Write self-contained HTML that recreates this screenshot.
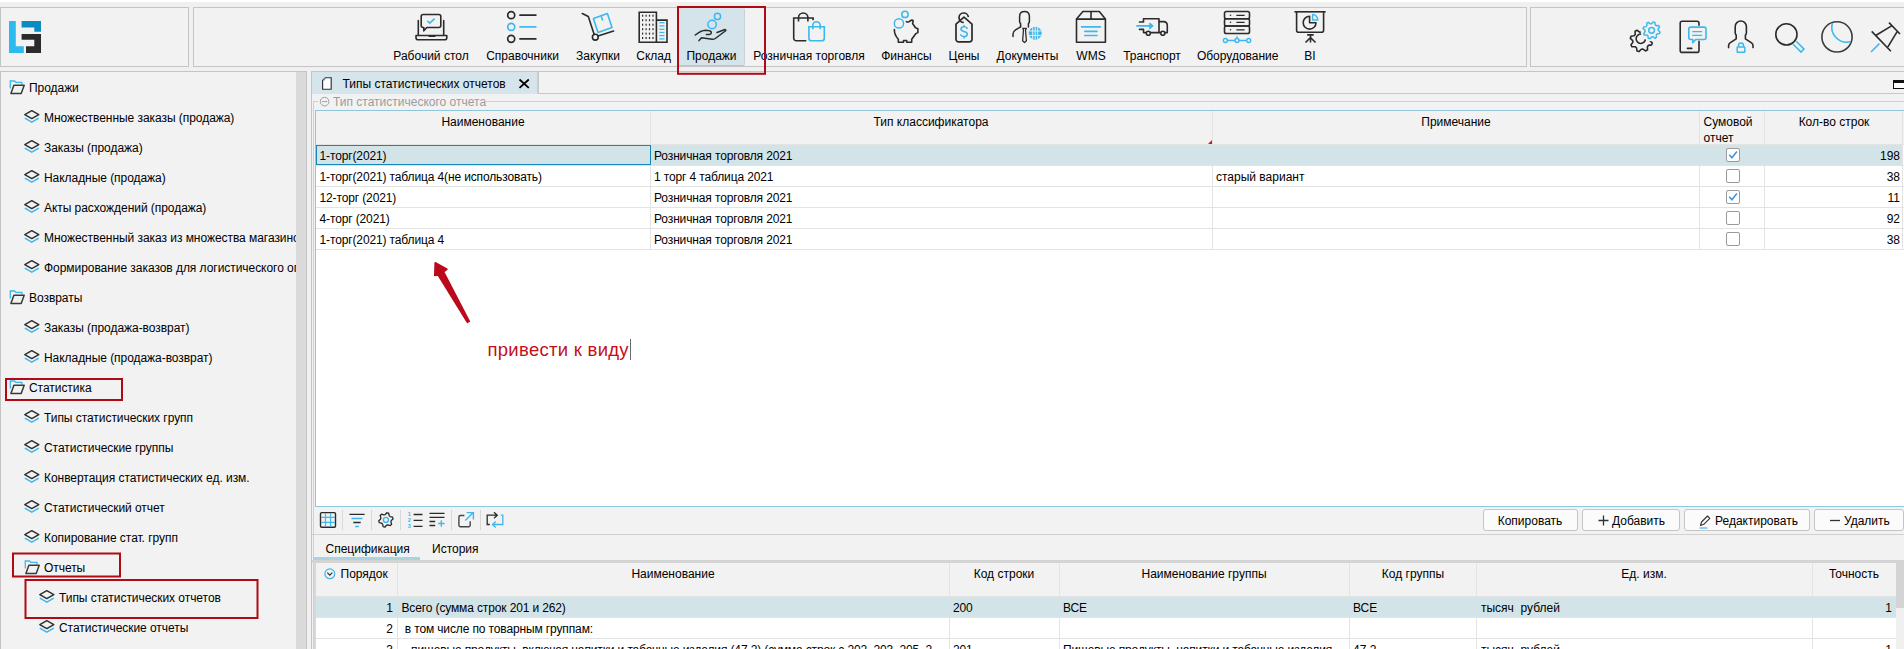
<!DOCTYPE html><html><head><meta charset="utf-8"><style>
*{box-sizing:border-box;margin:0;padding:0}
html,body{width:1904px;height:649px;overflow:hidden;background:#f0f0f0;font-family:"Liberation Sans",sans-serif;font-size:12px;color:#000}
.ab{position:absolute}
.t{position:absolute;white-space:nowrap;line-height:16px;height:16px}
.c{text-align:center}
.r{text-align:right}
svg{position:absolute;overflow:visible}
</style></head><body>
<div class="ab" style="left:0;top:0;width:1904px;height:2px;background:#fff"></div>
<div class="ab" style="left:0;top:7px;width:189px;height:60px;border:1px solid #c4c4c4;background:#f2f2f2"></div>
<div class="ab" style="left:193px;top:7px;width:1334px;height:60px;border:1px solid #c4c4c4;background:#f2f2f2"></div>
<div class="ab" style="left:1530px;top:7px;width:380px;height:60px;border:1px solid #c4c4c4;background:#f2f2f2"></div>
<div class="ab" style="left:679px;top:8px;width:66px;height:58px;background:#d5e4ea;border-right:1px solid #c9d3d7;border-bottom:1px solid #c4c4c4;border-radius:0 2px 2px 0"></div>
<div class="t c" style="left:331.0px;top:47.5px;width:200px;">Рабочий стол</div>
<div class="t c" style="left:422.5px;top:47.5px;width:200px;">Справочники</div>
<div class="t c" style="left:498.0px;top:47.5px;width:200px;">Закупки</div>
<div class="t c" style="left:553.6px;top:47.5px;width:200px;">Склад</div>
<div class="t c" style="left:611.5px;top:47.5px;width:200px;">Продажи</div>
<div class="t c" style="left:709.0px;top:47.5px;width:200px;">Розничная торговля</div>
<div class="t c" style="left:806.4px;top:47.5px;width:200px;">Финансы</div>
<div class="t c" style="left:864.0px;top:47.5px;width:200px;">Цены</div>
<div class="t c" style="left:927.4000000000001px;top:47.5px;width:200px;">Документы</div>
<div class="t c" style="left:991.0px;top:47.5px;width:200px;">WMS</div>
<div class="t c" style="left:1052.0px;top:47.5px;width:200px;">Транспорт</div>
<div class="t c" style="left:1137.7px;top:47.5px;width:200px;">Оборудование</div>
<div class="t c" style="left:1210.0px;top:47.5px;width:200px;">BI</div>
<div class="ab" style="left:0;top:71px;width:307px;height:600px;border:1px solid #c4c4c4;background:#f2f2f2"></div>
<div class="ab" style="left:296px;top:72px;width:10px;height:600px;background:#dadada"></div>
<div class="ab" style="left:1px;top:72px;width:295px;height:577px;overflow:hidden">
<div class="t" style="left:28px;top:8px;letter-spacing:-0.05px">Продажи</div>
<div class="t" style="left:43px;top:38px;letter-spacing:-0.05px">Множественные заказы (продажа)</div>
<div class="t" style="left:43px;top:68px;letter-spacing:-0.05px">Заказы (продажа)</div>
<div class="t" style="left:43px;top:98px;letter-spacing:-0.05px">Накладные (продажа)</div>
<div class="t" style="left:43px;top:128px;letter-spacing:-0.05px">Акты расхождений (продажа)</div>
<div class="t" style="left:43px;top:158px;letter-spacing:-0.05px">Множественный заказ из множества магазинов</div>
<div class="t" style="left:43px;top:188px;letter-spacing:-0.05px">Формирование заказов для логистического оператора</div>
<div class="t" style="left:28px;top:218px;letter-spacing:-0.05px">Возвраты</div>
<div class="t" style="left:43px;top:248px;letter-spacing:-0.05px">Заказы (продажа-возврат)</div>
<div class="t" style="left:43px;top:278px;letter-spacing:-0.05px">Накладные (продажа-возврат)</div>
<div class="t" style="left:28px;top:308px;letter-spacing:-0.05px">Статистика</div>
<div class="t" style="left:43px;top:338px;letter-spacing:-0.05px">Типы статистических групп</div>
<div class="t" style="left:43px;top:368px;letter-spacing:-0.05px">Статистические группы</div>
<div class="t" style="left:43px;top:398px;letter-spacing:-0.05px">Конвертация статистических ед. изм.</div>
<div class="t" style="left:43px;top:428px;letter-spacing:-0.05px">Статистический отчет</div>
<div class="t" style="left:43px;top:458px;letter-spacing:-0.05px">Копирование стат. групп</div>
<div class="t" style="left:43px;top:488px;letter-spacing:-0.05px">Отчеты</div>
<div class="t" style="left:58px;top:518px;letter-spacing:-0.05px">Типы статистических отчетов</div>
<div class="t" style="left:58px;top:548px;letter-spacing:-0.05px">Статистические отчеты</div>
</div>
<div class="ab" style="left:311px;top:71px;width:1600px;height:600px;border:1px solid #c4c4c4;background:#f2f2f2"></div>
<div class="ab" style="left:312px;top:72px;width:226px;height:22px;background:#d6e5eb;border-right:1px solid #c6d0d4"></div>
<div class="t " style="left:342.5px;top:76px;">Типы статистических отчетов</div>
<div class="ab" style="left:1893px;top:80px;width:12px;height:9px;border:1px solid #111;border-top-width:3px;border-right:none;background:#fff"></div>
<div class="ab" style="left:313px;top:101px;width:1600px;height:600px;border-left:1px solid #d0d0d0;border-top:1px solid #d0d0d0"></div>
<div class="ab" style="left:318px;top:95px;width:168px;height:12px;background:#f2f2f2"></div>
<div class="t " style="left:333px;top:94px;color:#9c9c9c">Тип статистического отчета</div>
<div class="ab" style="left:315px;top:110px;width:1600px;height:397px;border:1px solid #8fc6dc;background:#fff"></div>
<div class="ab" style="left:316px;top:111px;width:1588px;height:34px;background:#f2f2f2;border-bottom:1px solid #e3e3e3"></div>
<div class="ab" style="left:650px;top:111px;width:1px;height:138px;background:#e3e3e3"></div>
<div class="ab" style="left:1212px;top:111px;width:1px;height:138px;background:#e3e3e3"></div>
<div class="ab" style="left:1699px;top:111px;width:1px;height:138px;background:#e3e3e3"></div>
<div class="ab" style="left:1764px;top:111px;width:1px;height:138px;background:#e3e3e3"></div>
<div class="ab" style="left:1902px;top:111px;width:1px;height:138px;background:#e3e3e3"></div>
<div class="t c" style="left:383.0px;top:114px;width:200px;">Наименование</div>
<div class="t c" style="left:831.0px;top:114px;width:200px;">Тип классификатора</div>
<div class="t c" style="left:1356.0px;top:114px;width:200px;">Примечание</div>
<div class="t " style="left:1703.5px;top:114px;">Сумовой</div>
<div class="t " style="left:1703.5px;top:130px;">отчет</div>
<div class="t c" style="left:1734.0px;top:114px;width:200px;">Кол-во строк</div>
<div class="ab" style="left:316px;top:145px;width:1586px;height:20px;background:#d3e4e9"></div>
<div class="ab" style="left:316px;top:165px;width:1588px;height:1px;background:#e3e3e3"></div>
<div class="t " style="left:319.5px;top:148px;letter-spacing:-0.13px">1-торг(2021)</div>
<div class="t " style="left:654px;top:148px;letter-spacing:-0.13px">Розничная торговля 2021</div>
<div class="t " style="left:1216px;top:148px;"></div>
<div class="t r" style="left:1700px;top:148px;width:200px;">198</div>
<div class="ab" style="left:1726px;top:148px;width:14px;height:14px;border:1px solid #9a9a9a;border-radius:2px;background:#fff"></div>
<div class="ab" style="left:316px;top:186px;width:1588px;height:1px;background:#e3e3e3"></div>
<div class="t " style="left:319.5px;top:169px;letter-spacing:-0.13px">1-торг(2021) таблица 4(не использовать)</div>
<div class="t " style="left:654px;top:169px;letter-spacing:-0.13px">1 торг 4 таблица 2021</div>
<div class="t " style="left:1216px;top:169px;">старый вариант</div>
<div class="t r" style="left:1700px;top:169px;width:200px;">38</div>
<div class="ab" style="left:1726px;top:169px;width:14px;height:14px;border:1px solid #9a9a9a;border-radius:2px;background:#fff"></div>
<div class="ab" style="left:316px;top:207px;width:1588px;height:1px;background:#e3e3e3"></div>
<div class="t " style="left:319.5px;top:190px;letter-spacing:-0.13px">12-торг (2021)</div>
<div class="t " style="left:654px;top:190px;letter-spacing:-0.13px">Розничная торговля 2021</div>
<div class="t " style="left:1216px;top:190px;"></div>
<div class="t r" style="left:1700px;top:190px;width:200px;">11</div>
<div class="ab" style="left:1726px;top:190px;width:14px;height:14px;border:1px solid #9a9a9a;border-radius:2px;background:#fff"></div>
<div class="ab" style="left:316px;top:228px;width:1588px;height:1px;background:#e3e3e3"></div>
<div class="t " style="left:319.5px;top:211px;letter-spacing:-0.13px">4-торг (2021)</div>
<div class="t " style="left:654px;top:211px;letter-spacing:-0.13px">Розничная торговля 2021</div>
<div class="t " style="left:1216px;top:211px;"></div>
<div class="t r" style="left:1700px;top:211px;width:200px;">92</div>
<div class="ab" style="left:1726px;top:211px;width:14px;height:14px;border:1px solid #9a9a9a;border-radius:2px;background:#fff"></div>
<div class="ab" style="left:316px;top:249px;width:1588px;height:1px;background:#e3e3e3"></div>
<div class="t " style="left:319.5px;top:232px;letter-spacing:-0.13px">1-торг(2021) таблица 4</div>
<div class="t " style="left:654px;top:232px;letter-spacing:-0.13px">Розничная торговля 2021</div>
<div class="t " style="left:1216px;top:232px;"></div>
<div class="t r" style="left:1700px;top:232px;width:200px;">38</div>
<div class="ab" style="left:1726px;top:232px;width:14px;height:14px;border:1px solid #9a9a9a;border-radius:2px;background:#fff"></div>
<div class="ab" style="left:316px;top:145px;width:335px;height:20px;border:1px solid #1287be"></div>
<div class="ab" style="left:538px;top:72px;width:1366px;height:22px;border-left:1px solid #c8c8c8;border-bottom:1px solid #c8c8c8"></div>
<div class="ab" style="left:487.5px;top:338px;font-size:18.5px;line-height:24px;color:#c40f1a;white-space:nowrap;letter-spacing:0.28px">привести к виду</div>
<div class="ab" style="left:629.5px;top:339px;width:1px;height:21px;background:#6a6a6a"></div>
<div class="ab" style="left:312px;top:534px;width:1600px;height:1px;background:#d0d0d0"></div>
<div class="ab" style="left:342px;top:510px;width:1px;height:20px;background:#d8d8d8"></div>
<div class="ab" style="left:371px;top:510px;width:1px;height:20px;background:#d8d8d8"></div>
<div class="ab" style="left:400px;top:510px;width:1px;height:20px;background:#d8d8d8"></div>
<div class="ab" style="left:451px;top:510px;width:1px;height:20px;background:#d8d8d8"></div>
<div class="ab" style="left:480px;top:510px;width:1px;height:20px;background:#d8d8d8"></div>
<div class="ab" style="left:1483px;top:509px;width:95px;height:22px;border:1px solid #c5c5c5;border-radius:3px;background:#fbfbfb"></div>
<div class="ab" style="left:1582px;top:509px;width:98px;height:22px;border:1px solid #c5c5c5;border-radius:3px;background:#fbfbfb"></div>
<div class="ab" style="left:1684px;top:509px;width:126px;height:22px;border:1px solid #c5c5c5;border-radius:3px;background:#fbfbfb"></div>
<div class="ab" style="left:1814px;top:509px;width:90px;height:22px;border:1px solid #c5c5c5;border-radius:3px;background:#fbfbfb"></div>
<div class="t c" style="left:1430.0px;top:513px;width:200px;">Копировать</div>
<div class="t " style="left:1612px;top:513px;">Добавить</div>
<div class="t " style="left:1715px;top:513px;">Редактировать</div>
<div class="t " style="left:1844px;top:513px;">Удалить</div>
<div class="t " style="left:325.5px;top:541px;">Спецификация</div>
<div class="t " style="left:432px;top:541px;">История</div>
<div class="ab" style="left:312px;top:560px;width:1600px;height:3px;background:#d4d4d4"></div>
<div class="ab" style="left:313px;top:557px;width:107px;height:3px;background:#a9d3df"></div>
<div class="ab" style="left:314px;top:563px;width:1590px;height:100px;background:#fff;border-left:2px solid #d8d8d8"></div>
<div class="ab" style="left:316px;top:563px;width:1580px;height:34px;background:#f2f2f2;border-bottom:1px solid #e3e3e3"></div>
<div class="ab" style="left:1896px;top:563px;width:8px;height:90px;background:#f0f0f0"></div>
<div class="ab" style="left:1896px;top:563px;width:8px;height:45px;background:#d4d4d4"></div>
<div class="ab" style="left:397px;top:563px;width:1px;height:90px;background:#e3e3e3"></div>
<div class="ab" style="left:949px;top:563px;width:1px;height:90px;background:#e3e3e3"></div>
<div class="ab" style="left:1059px;top:563px;width:1px;height:90px;background:#e3e3e3"></div>
<div class="ab" style="left:1349px;top:563px;width:1px;height:90px;background:#e3e3e3"></div>
<div class="ab" style="left:1476px;top:563px;width:1px;height:90px;background:#e3e3e3"></div>
<div class="ab" style="left:1812px;top:563px;width:1px;height:90px;background:#e3e3e3"></div>
<div class="t " style="left:340.5px;top:566px;">Порядок</div>
<div class="t c" style="left:573.0px;top:566px;width:200px;">Наименование</div>
<div class="t c" style="left:904.0px;top:566px;width:200px;">Код строки</div>
<div class="t c" style="left:1104.0px;top:566px;width:200px;">Наименование группы</div>
<div class="t c" style="left:1313.0px;top:566px;width:200px;">Код группы</div>
<div class="t c" style="left:1544.0px;top:566px;width:200px;">Ед. изм.</div>
<div class="t c" style="left:1754.0px;top:566px;width:200px;">Точность</div>
<div class="ab" style="left:316px;top:597px;width:1580px;height:20px;background:#d3e4e9"></div>
<div class="ab" style="left:316px;top:617px;width:1580px;height:1px;background:#e3e3e3"></div>
<div class="t r" style="left:193px;top:600px;width:200px;">1</div>
<div class="t" style="left:401.5px;top:600px;width:546px;overflow:hidden;letter-spacing:-0.13px">Всего (сумма строк 201 и 262)</div>
<div class="t " style="left:953px;top:600px;letter-spacing:-0.13px">200</div>
<div class="t" style="left:1063px;top:600px;width:284px;overflow:hidden;letter-spacing:-0.13px">ВСЕ</div>
<div class="t " style="left:1353px;top:600px;">ВСЕ</div>
<div class="t " style="left:1481px;top:600px;">тысяч&nbsp; рублей</div>
<div class="t r" style="left:1692px;top:600px;width:200px;">1</div>
<div class="ab" style="left:316px;top:638px;width:1580px;height:1px;background:#e3e3e3"></div>
<div class="t r" style="left:193px;top:621px;width:200px;">2</div>
<div class="t" style="left:401.5px;top:621px;width:546px;overflow:hidden;letter-spacing:-0.13px">&nbsp;в том числе по товарным группам:</div>
<div class="t " style="left:953px;top:621px;letter-spacing:-0.13px"></div>
<div class="t" style="left:1063px;top:621px;width:284px;overflow:hidden;letter-spacing:-0.13px"></div>
<div class="t " style="left:1353px;top:621px;"></div>
<div class="t " style="left:1481px;top:621px;"></div>
<div class="t r" style="left:1692px;top:621px;width:200px;"></div>
<div class="ab" style="left:316px;top:659px;width:1580px;height:1px;background:#e3e3e3"></div>
<div class="t r" style="left:193px;top:642px;width:200px;">3</div>
<div class="t" style="left:401.5px;top:642px;width:546px;overflow:hidden;letter-spacing:-0.13px">&nbsp;&nbsp;&nbsp;пищевые продукты, включая напитки и табачные изделия (47.2) (сумма строк с 202, 203, 205, 2</div>
<div class="t " style="left:953px;top:642px;letter-spacing:-0.13px">201</div>
<div class="t" style="left:1063px;top:642px;width:284px;overflow:hidden;letter-spacing:-0.13px">Пищевые продукты, напитки и табачные изделия</div>
<div class="t " style="left:1353px;top:642px;">47.2</div>
<div class="t " style="left:1481px;top:642px;">тысяч&nbsp; рублей</div>
<div class="t r" style="left:1692px;top:642px;width:200px;">1</div>
<svg style="left:0;top:0" width="1904" height="649" viewBox="0 0 1904 649">
<path d="M9 21h6.8v25.2h8V53H9z" fill="#2dbbef"/><path d="M21.6 21H41v10.7h-6.7v-4.3H21.6z" fill="#0a8cc0"/><path d="M21.6 33.9H41V53H26v-6.8h8.3v-6.5H21.6z" fill="#2b2b2b"/>
<g fill="none" stroke="#2b2b2b" stroke-width="1.6" stroke-linecap="round" stroke-linejoin="round"><path d="M423.2 14.5h15.6a2 2 0 0 1 2 2v9a2 2 0 0 1-2 2h-12l-3 3.3v-3.3h-.6a2 2 0 0 1-2-2v-9a2 2 0 0 1 2-2z"/><path d="M418.3 20.5v14.3M443.7 20.5v14.3"/><path d="M416 35.5h30.8v2.3a2 2 0 0 1-2 2h-26.8a2 2 0 0 1-2-2z"/><path d="M421 35.5h7.5l1 1h5l1-1h7.5" stroke-width="1.2"/></g>
<path d="M427.3 20.7l2.5 2.5 4.8-4.6" fill="none" stroke="#3db8ee" stroke-width="1.6"/>
<g fill="none" stroke="#2b2b2b" stroke-width="1.7"><circle cx="511.2" cy="15.2" r="3.5"/><circle cx="511.2" cy="38.8" r="3.5"/><path d="M519.3 15.2h17.2M519.3 38.8h17.2"/></g>
<g fill="none" stroke="#3db8ee" stroke-width="1.7"><circle cx="511.2" cy="26.9" r="3.5"/><path d="M519.3 26.9h17.2"/></g>
<g fill="none" stroke="#2b2b2b" stroke-width="1.6" stroke-linecap="round" stroke-linejoin="round"><path d="M582.3 13.5l6 3 5.8 17.8"/><circle cx="595.3" cy="37.2" r="2.9"/><path d="M598 36l15.6-5"/></g>
<g fill="none" stroke="#3db8ee" stroke-width="1.6" stroke-linejoin="round"><path d="M593.4 18.5l14-4.9 4.6 14-14 4.9z"/><path d="M601.3 16.2l1.3 4.2"/></g>
<g fill="none" stroke="#2b2b2b" stroke-width="1.6"><path d="M639.2 12.2h17.2v30H639.2z"/><path d="M656.4 20.1h10.6v22.1H656.4"/></g>
<g fill="#2b2b2b"><rect x="642.0" y="14.7" width="1.2" height="2" /><rect x="642.0" y="19.2" width="1.2" height="2" /><rect x="642.0" y="23.7" width="1.2" height="2" /><rect x="642.0" y="28.2" width="1.2" height="2" /><rect x="642.0" y="32.6" width="1.2" height="2" /><rect x="642.0" y="37.0" width="1.2" height="2" /><rect x="645.5" y="14.7" width="1.2" height="2" /><rect x="645.5" y="19.2" width="1.2" height="2" /><rect x="645.5" y="23.7" width="1.2" height="2" /><rect x="645.5" y="28.2" width="1.2" height="2" /><rect x="645.5" y="32.6" width="1.2" height="2" /><rect x="645.5" y="37.0" width="1.2" height="2" /><rect x="648.9" y="14.7" width="1.2" height="2" /><rect x="648.9" y="19.2" width="1.2" height="2" /><rect x="648.9" y="23.7" width="1.2" height="2" /><rect x="648.9" y="28.2" width="1.2" height="2" /><rect x="648.9" y="32.6" width="1.2" height="2" /><rect x="648.9" y="37.0" width="1.2" height="2" /><rect x="652.4" y="14.7" width="1.2" height="2" /><rect x="652.4" y="19.2" width="1.2" height="2" /><rect x="652.4" y="23.7" width="1.2" height="2" /><rect x="652.4" y="28.2" width="1.2" height="2" /><rect x="652.4" y="32.6" width="1.2" height="2" /><rect x="652.4" y="37.0" width="1.2" height="2" /></g>
<g stroke="#3db8ee" stroke-width="1.3"><path d="M659.3 22.7h5.2"/><path d="M659.3 25.9h5.2"/><path d="M659.3 29.3h5.2"/><path d="M659.3 32.5h5.2"/><path d="M659.3 35.6h5.2"/><path d="M659.3 38.9h5.2"/></g>
<g fill="none" stroke="#3db8ee" stroke-width="1.5"><circle cx="717.5" cy="16.4" r="3.1"/><circle cx="712.1" cy="24.5" r="4.2"/></g>
<g fill="none" stroke="#2b2b2b" stroke-width="1.5" stroke-linecap="round" stroke-linejoin="round"><path d="M695.3 35q5.5-4.6 10.4-4.8 4.2 0 5.4 1.6.8 1.7-1.4 2.6h-3.3"/><path d="M717 32.5l8-3q1.5 .3 .3 1.5l-10 7.5q-1.2 .8-3 .8l-10.8-1.5-2.5 2.8"/></g>
<g fill="none" stroke="#2b2b2b" stroke-width="1.6"><path d="M806.3 40.8h-10a2.6 2.6 0 0 1-2.6-2.6V18h19.4v2.2"/><path d="M798.5 21.5v-3.8a4.7 4.7 0 0 1 9.4 0v3.8"/></g>
<g fill="none" stroke="#3db8ee" stroke-width="1.6"><path d="M808.9 26.7h15.4v11.5a2.6 2.6 0 0 1-2.6 2.6h-10.2a2.6 2.6 0 0 1-2.6-2.6z"/><path d="M812.8 29.3v-3.8a3.7 3.7 0 0 1 7.4 0v3.8"/></g>
<g fill="none" stroke="#3db8ee" stroke-width="1.5"><circle cx="905" cy="14.4" r="3.2"/><circle cx="898.95" cy="23.4" r="4.6"/></g>
<path d="M894.4 29.6q-.3 4.8 3.9 9.6v3.1h5.2v-1.8h3.2v1.8h5v-3.1l4.2-5.6 2-1v-3.8l-2.4-1-2.9-4.3.6-2.8q-1.2-1.2-3 .2-2 1.8-3.8 .7" fill="none" stroke="#2b2b2b" stroke-width="1.6" stroke-linejoin="round" stroke-linecap="round"/>
<g fill="none" stroke="#2b2b2b" stroke-width="1.7" stroke-linejoin="round"><path d="M964 17.1l8 7v15.2a2.6 2.6 0 0 1-2.6 2.6h-10.8a2.6 2.6 0 0 1-2.6-2.6V24.1z"/><path d="M963.8 22.4a4.7 4.7 0 1 1 4.6-5.2"/></g>
<path d="M967.2 28.3q-1-1.6-3.2-1.6-3 0-3 2.3 0 1.9 3 2.5 3.3.6 3.3 2.7 0 2.3-3.3 2.3-2.2 0-3.3-1.6M964 25.6v1.2M964 36.5v1.4" fill="none" stroke="#3db8ee" stroke-width="1.6" stroke-linecap="round"/>
<g fill="none" stroke="#2b2b2b" stroke-width="1.5" stroke-linecap="round" stroke-linejoin="round"><path d="M1020.6 26.7v-3.2q-1.2-.8-1-2.5v-4.5q0-5 4.9-5 4.9 0 4.9 5v4.5q.2 1.7-1 2.5v3.6"/><path d="M1020.6 26.9l-5 3q-2.6 1.6-2.6 4v2.6"/><path d="M1022.8 28.4h3.6l-.9 1.6.9 10.7-1.9 1.9-1.9-1.9.9-10.7z" stroke-width="1.3"/></g>
<circle cx="1035.2" cy="33.2" r="6.5" fill="#3db8ee"/><g stroke="#f2f2f2" stroke-width="0.9" fill="none"><path d="M1029 31h12.4M1029 35.4h12.4"/><path d="M1032.7 27.2v12M1035.2 26.8v12.8M1037.7 27.2v12"/></g>
<g fill="none" stroke="#2b2b2b" stroke-width="1.6" stroke-linejoin="round"><path d="M1076.5 19.1l6.4-7.6h16.4l6.1 7.6v23.2h-28.9z"/><path d="M1076.5 19.1h28.9M1091 11.5v7.6"/></g>
<g stroke="#3db8ee" stroke-width="1.6" stroke-linecap="round"><path d="M1081.5 26.9h19M1084.8 31.4h12.2M1084.8 35.5h12.2"/></g>
<g fill="none" stroke="#2b2b2b" stroke-width="1.6" stroke-linejoin="round" stroke-linecap="round"><path d="M1139.5 22h4v-3.2h15.5v13.8"/><path d="M1139.5 29.4h4v3.2h2.6M1150.5 32.6h10M1165 32.6h2.3v-7q0-4-4-4h-4.3"/><circle cx="1148.3" cy="33.2" r="2"/><circle cx="1162.8" cy="33.2" r="2"/></g>
<path d="M1136.3 25.9h14.5" stroke="#3db8ee" stroke-width="1.8"/><path d="M1149.8 23.3l3.2 2.6-3.2 2.6z" fill="#3db8ee" stroke="#3db8ee" stroke-width="1.2" stroke-linejoin="round"/>
<g fill="none" stroke="#2b2b2b" stroke-width="1.6"><rect x="1224.5" y="11.5" width="25" height="7.3" rx="1.8"/><rect x="1224.5" y="18.8" width="25" height="7.2" rx="1.8"/><rect x="1224.5" y="26" width="25" height="7.5" rx="1.8"/><path d="M1236.4 15.3h8.2M1236.4 22.4h8.2M1236.4 29.8h8.2" stroke-width="1.3"/></g><g fill="#2b2b2b"><circle cx="1230.5" cy="15.3" r=".8"/><circle cx="1230.5" cy="22.3" r=".8"/><circle cx="1230.5" cy="29.8" r=".8"/></g>
<g fill="none" stroke="#3db8ee" stroke-width="1.4"><path d="M1227.4 40.5h7.6M1239 40.5h7.6M1237 36.3v2.2"/><circle cx="1225.4" cy="40.5" r="2"/><circle cx="1237" cy="40.5" r="2"/><circle cx="1248.7" cy="40.5" r="2"/></g>
<g fill="none" stroke="#2b2b2b" stroke-width="1.6" stroke-linejoin="round"><path d="M1294.4 11.8h31.3"/><path d="M1296.6 11.8v18.5a2 2 0 0 0 2 2h23a2 2 0 0 0 2-2V11.8"/><path d="M1309.6 16.3a6.4 6.4 0 1 0 6.4 6.4h-6.4z"/><path d="M1307.2 34.9h6.5M1310.5 34.9v7.6M1310.5 37.5l-5 5M1310.5 37.5l5 5"/></g>
<path d="M1312.6 14.6a5.3 5.3 0 0 1 5.2 5.3h-5.2z" fill="none" stroke="#3db8ee" stroke-width="1.5" stroke-linejoin="round"/>
<path d="M1641.30 32.00 L1643.49 29.62 L1645.59 30.25 L1646.08 33.45 L1647.38 34.52 L1650.61 34.38 L1651.65 36.31 L1649.73 38.92 L1649.90 40.60 L1652.28 42.79 L1651.65 44.89 L1648.45 45.38 L1647.38 46.68 L1647.52 49.91 L1645.59 50.95 L1642.98 49.03 L1641.30 49.20 L1639.11 51.58 L1637.01 50.95 L1636.52 47.75 L1635.22 46.68 L1631.99 46.82 L1630.95 44.89 L1632.87 42.28 L1632.70 40.60 L1630.32 38.41 L1630.95 36.31 L1634.15 35.82 L1635.22 34.52 L1635.08 31.29 L1637.01 30.25 L1639.62 32.17Z" fill="none" stroke="#2b2b2b" stroke-width="1.6" stroke-linejoin="round"/>
<path d="M1645.5 38.8a4.7 4.7 0 1 1-4-4.7" fill="none" stroke="#2b2b2b" stroke-width="1.6"/>
<circle cx="1651.6" cy="30.3" r="11" fill="#f2f2f2"/>
<path d="M1651.60 23.70 L1653.28 21.87 L1654.89 22.35 L1655.27 24.81 L1656.27 25.63 L1658.75 25.52 L1659.55 27.01 L1658.07 29.01 L1658.20 30.30 L1660.03 31.98 L1659.55 33.59 L1657.09 33.97 L1656.27 34.97 L1656.38 37.45 L1654.89 38.25 L1652.89 36.77 L1651.60 36.90 L1649.92 38.73 L1648.31 38.25 L1647.93 35.79 L1646.93 34.97 L1644.45 35.08 L1643.65 33.59 L1645.13 31.59 L1645.00 30.30 L1643.17 28.62 L1643.65 27.01 L1646.11 26.63 L1646.93 25.63 L1646.82 23.15 L1648.31 22.35 L1650.31 23.83Z" fill="none" stroke="#3db8ee" stroke-width="1.5" stroke-linejoin="round"/>
<circle cx="1651.6" cy="30.3" r="2.9" fill="none" stroke="#3db8ee" stroke-width="1.5"/>
<g fill="none" stroke="#2b2b2b" stroke-width="1.6" stroke-linecap="round"><path d="M1699 25.2v-2a2 2 0 0 0-2-2h-14.8a2 2 0 0 0-2 2v27.2a2 2 0 0 0 2 2H1697a2 2 0 0 0 2-2v-9"/><path d="M1687.4 48.4h4.4"/></g>
<g fill="none" stroke="#3db8ee" stroke-width="1.6" stroke-linejoin="round"><path d="M1690.8 27.1h13.2a2 2 0 0 1 2 2v8.4a2 2 0 0 1-2 2h-8.3l-2.9 3.2v-3.2h-2a2 2 0 0 1-2-2v-8.4a2 2 0 0 1 2-2z"/><path d="M1692.2 31.6h10M1692.2 35.3h10" stroke-width="1.3"/></g>
<path d="M1728.6 47.6v-2.2q0-1.6 1.8-2.8l5.8-3.8v-3.6q-1-.9-1-2.4v-6.3a5.6 5.6 0 0 1 11.2 0v6.3q0 1.5-1 2.4v3.6l5.8 3.8q1.8 1.2 1.8 2.8v2.2" fill="none" stroke="#2b2b2b" stroke-width="1.6" stroke-linecap="round" stroke-linejoin="round"/>
<g fill="none" stroke="#3db8ee" stroke-width="1.5"><rect x="1737.2" y="47" width="7.6" height="5.3" rx=".6"/><path d="M1738.5 47v-1.4a2.5 2.5 0 0 1 5 0V47"/></g>
<circle cx="1786.4" cy="34.4" r="10.6" fill="none" stroke="#2b2b2b" stroke-width="1.6"/>
<path d="M1796.2 41.3L1804 49.1l-3 3-7.8-7.8" fill="none" stroke="#3db8ee" stroke-width="1.5"/>
<circle cx="1837" cy="36.9" r="15.1" fill="none" stroke="#2b2b2b" stroke-width="1.6" opacity=".92"/>
<path d="M1832.4 23a15 15 0 0 0 18.6 18.6" fill="none" stroke="#3db8ee" stroke-width="1.6"/>
<g fill="none" stroke="#2b2b2b" stroke-width="1.6" stroke-linecap="butt"><path d="M1871.7 31.4l19.2 19.9M1889 22.6l11 11.4M1876.1 35.3l15.5-9.4M1897 31.8l-9.1 15.1"/></g>
<path d="M1871 52l8.4-8.4" stroke="#3db8ee" stroke-width="1.6"/>
<g transform="translate(9.5 80)"><path d="M.8 8.5V1h4.3l1.3 1.4h6v2" fill="none" stroke="#3db8ee" stroke-width="1.3"/><path d="M1.4 13.6l3-8.3h10.3l-3 8.3z" fill="none" stroke="#3a3a3a" stroke-width="1.5" stroke-linejoin="round"/></g>
<g transform="translate(24 110)"><path d="M.8 4.6l7-4 7 4-7 4z" fill="none" stroke="#2e2e2e" stroke-width="1.4" stroke-linejoin="round"/><path d="M.8 8.2l7 4 7-4" fill="none" stroke="#3db8ee" stroke-width="1.4"/></g>
<g transform="translate(24 140)"><path d="M.8 4.6l7-4 7 4-7 4z" fill="none" stroke="#2e2e2e" stroke-width="1.4" stroke-linejoin="round"/><path d="M.8 8.2l7 4 7-4" fill="none" stroke="#3db8ee" stroke-width="1.4"/></g>
<g transform="translate(24 170)"><path d="M.8 4.6l7-4 7 4-7 4z" fill="none" stroke="#2e2e2e" stroke-width="1.4" stroke-linejoin="round"/><path d="M.8 8.2l7 4 7-4" fill="none" stroke="#3db8ee" stroke-width="1.4"/></g>
<g transform="translate(24 200)"><path d="M.8 4.6l7-4 7 4-7 4z" fill="none" stroke="#2e2e2e" stroke-width="1.4" stroke-linejoin="round"/><path d="M.8 8.2l7 4 7-4" fill="none" stroke="#3db8ee" stroke-width="1.4"/></g>
<g transform="translate(24 230)"><path d="M.8 4.6l7-4 7 4-7 4z" fill="none" stroke="#2e2e2e" stroke-width="1.4" stroke-linejoin="round"/><path d="M.8 8.2l7 4 7-4" fill="none" stroke="#3db8ee" stroke-width="1.4"/></g>
<g transform="translate(24 260)"><path d="M.8 4.6l7-4 7 4-7 4z" fill="none" stroke="#2e2e2e" stroke-width="1.4" stroke-linejoin="round"/><path d="M.8 8.2l7 4 7-4" fill="none" stroke="#3db8ee" stroke-width="1.4"/></g>
<g transform="translate(9.5 290)"><path d="M.8 8.5V1h4.3l1.3 1.4h6v2" fill="none" stroke="#3db8ee" stroke-width="1.3"/><path d="M1.4 13.6l3-8.3h10.3l-3 8.3z" fill="none" stroke="#3a3a3a" stroke-width="1.5" stroke-linejoin="round"/></g>
<g transform="translate(24 320)"><path d="M.8 4.6l7-4 7 4-7 4z" fill="none" stroke="#2e2e2e" stroke-width="1.4" stroke-linejoin="round"/><path d="M.8 8.2l7 4 7-4" fill="none" stroke="#3db8ee" stroke-width="1.4"/></g>
<g transform="translate(24 350)"><path d="M.8 4.6l7-4 7 4-7 4z" fill="none" stroke="#2e2e2e" stroke-width="1.4" stroke-linejoin="round"/><path d="M.8 8.2l7 4 7-4" fill="none" stroke="#3db8ee" stroke-width="1.4"/></g>
<g transform="translate(9.5 380)"><path d="M.8 8.5V1h4.3l1.3 1.4h6v2" fill="none" stroke="#3db8ee" stroke-width="1.3"/><path d="M1.4 13.6l3-8.3h10.3l-3 8.3z" fill="none" stroke="#3a3a3a" stroke-width="1.5" stroke-linejoin="round"/></g>
<g transform="translate(24 410)"><path d="M.8 4.6l7-4 7 4-7 4z" fill="none" stroke="#2e2e2e" stroke-width="1.4" stroke-linejoin="round"/><path d="M.8 8.2l7 4 7-4" fill="none" stroke="#3db8ee" stroke-width="1.4"/></g>
<g transform="translate(24 440)"><path d="M.8 4.6l7-4 7 4-7 4z" fill="none" stroke="#2e2e2e" stroke-width="1.4" stroke-linejoin="round"/><path d="M.8 8.2l7 4 7-4" fill="none" stroke="#3db8ee" stroke-width="1.4"/></g>
<g transform="translate(24 470)"><path d="M.8 4.6l7-4 7 4-7 4z" fill="none" stroke="#2e2e2e" stroke-width="1.4" stroke-linejoin="round"/><path d="M.8 8.2l7 4 7-4" fill="none" stroke="#3db8ee" stroke-width="1.4"/></g>
<g transform="translate(24 500)"><path d="M.8 4.6l7-4 7 4-7 4z" fill="none" stroke="#2e2e2e" stroke-width="1.4" stroke-linejoin="round"/><path d="M.8 8.2l7 4 7-4" fill="none" stroke="#3db8ee" stroke-width="1.4"/></g>
<g transform="translate(24 530)"><path d="M.8 4.6l7-4 7 4-7 4z" fill="none" stroke="#2e2e2e" stroke-width="1.4" stroke-linejoin="round"/><path d="M.8 8.2l7 4 7-4" fill="none" stroke="#3db8ee" stroke-width="1.4"/></g>
<g transform="translate(24.5 560)"><path d="M.8 8.5V1h4.3l1.3 1.4h6v2" fill="none" stroke="#3db8ee" stroke-width="1.3"/><path d="M1.4 13.6l3-8.3h10.3l-3 8.3z" fill="none" stroke="#3a3a3a" stroke-width="1.5" stroke-linejoin="round"/></g>
<g transform="translate(39 590)"><path d="M.8 4.6l7-4 7 4-7 4z" fill="none" stroke="#2e2e2e" stroke-width="1.4" stroke-linejoin="round"/><path d="M.8 8.2l7 4 7-4" fill="none" stroke="#3db8ee" stroke-width="1.4"/></g>
<g transform="translate(39 620)"><path d="M.8 4.6l7-4 7 4-7 4z" fill="none" stroke="#2e2e2e" stroke-width="1.4" stroke-linejoin="round"/><path d="M.8 8.2l7 4 7-4" fill="none" stroke="#3db8ee" stroke-width="1.4"/></g>
<path d="M1729.3 154.8l2.6 3 5-6.3" fill="none" stroke="#3d97e0" stroke-width="1.6"/>
<path d="M1729.3 196.8l2.6 3 5-6.3" fill="none" stroke="#3d97e0" stroke-width="1.6"/>
<path d="M1212 140v4h-4z" fill="#e01010"/>
<path d="M325.3 77.7h5.9v11.5h-8.6v-8.7z" fill="#fff" stroke="#303030" stroke-width="1.15"/><path d="M322.8 80.3l2.4-2.4v2.4z" fill="#999"/>
<path d="M519.5 79.5l9.3 8.3M528.8 79.5l-9.3 8.3" stroke="#000" stroke-width="1.8"/>
<circle cx="324.6" cy="101.6" r="4.3" fill="none" stroke="#a0a0a0" stroke-width="1"/><path d="M322 101.6h5.2" stroke="#a0a0a0" stroke-width="1"/>
<rect x="320.5" y="512.6" width="15" height="14.6" rx="1.2" fill="none" stroke="#2a2a2a" stroke-width="1.4"/><path d="M325.5 513.3v13.3M330.5 513.3v13.3M321.2 517.3h13.6M321.2 522.4h13.6" stroke="#3db8ee" stroke-width="1.2"/>
<path d="M349.4 514.4h15.2M353.3 522.5h7.4" stroke="#2a2a2a" stroke-width="1.3"/><path d="M351.5 518.5h11M355.2 526.5h3.7" stroke="#3db8ee" stroke-width="1.3"/>
<path d="M386.84 512.76 L388.66 513.25 L389.19 515.62 L390.18 516.61 L392.55 517.14 L393.04 518.96 L391.25 520.60 L390.89 521.97 L391.61 524.28 L390.28 525.61 L387.97 524.89 L386.60 525.25 L384.96 527.04 L383.14 526.55 L382.61 524.18 L381.62 523.19 L379.25 522.66 L378.76 520.84 L380.55 519.20 L380.91 517.83 L380.19 515.52 L381.52 514.19 L383.83 514.91 L385.20 514.55Z" fill="none" stroke="#2a2a2a" stroke-width="1.3" stroke-linejoin="round"/>
<circle cx="385.9" cy="519.9" r="2.5" fill="none" stroke="#3db8ee" stroke-width="1.4"/>
<path d="M413.6 514.5h8.9M413.6 520.4h8.9M413.6 526.4h8.9" stroke="#2a2a2a" stroke-width="1.3"/>
<text x="409.2" y="516.3" font-size="5.5" font-family="Liberation Sans" font-weight="bold" fill="#3db8ee" text-anchor="middle">1</text><text x="409.2" y="522.3" font-size="5.5" font-family="Liberation Sans" font-weight="bold" fill="#3db8ee" text-anchor="middle">2</text><text x="409.2" y="528.3" font-size="5.5" font-family="Liberation Sans" font-weight="bold" fill="#3db8ee" text-anchor="middle">3</text>
<path d="M429.5 513.4h15M429.5 517.4h15M429.5 521.5h5.7M429.5 525.5h5.7" stroke="#2a2a2a" stroke-width="1.3"/><path d="M441.3 520.3v6.4M438.1 523.5h6.4" stroke="#3db8ee" stroke-width="1.3"/>
<path d="M464.4 515.5h-4a1.5 1.5 0 0 0-1.5 1.5v8.3a1.5 1.5 0 0 0 1.5 1.5h8.3a1.5 1.5 0 0 0 1.5-1.5v-4" fill="none" stroke="#444" stroke-width="1.4"/><path d="M465.3 520.4l8-7.8M466.7 512.6h6.7v7" fill="none" stroke="#3db8ee" stroke-width="1.4"/>
<path d="M489.8 524.5h-2.6v-9.3h10.4M494 512.2l3.3 3-3.3 3" fill="none" stroke="#2a2a2a" stroke-width="1.3"/><path d="M500.8 515.2h2v9.3h-10.4M495.8 521.5l-3.3 3 3.3 3" fill="none" stroke="#3db8ee" stroke-width="1.3"/>
<path d="M435.2 262.8L447 269.2 443.6 271.8 469.3 321.4 467.4 322.4 438.2 275 434.8 275.5z" fill="#bb0a1c" stroke="#bb0a1c" stroke-width="1.6" stroke-linejoin="round"/>
<path d="M1603.5 515.5v10M1598.5 520.5h10" stroke="#333" stroke-width="1.3"/>
<path d="M1700.5 525.5l1-3.5 6-6 2.3 2.3-6 6z" fill="none" stroke="#333" stroke-width="1.1" stroke-linejoin="round"/><path d="M1699.5 528h8" stroke="#3db8ee" stroke-width="1.2"/>
<path d="M1830 520.5h10" stroke="#333" stroke-width="1.3"/>
<circle cx="329.8" cy="573.8" r="4.9" fill="none" stroke="#3db8ee" stroke-width="1.3"/><path d="M327.3 572.6l2.5 2.5 2.5-2.5" fill="none" stroke="#333" stroke-width="1.2"/>
<g fill="none" stroke="#b00b14" stroke-width="2"><rect x="678" y="7" width="87" height="66.8"/><rect x="6" y="379" width="116" height="21"/><rect x="13" y="553.5" width="107" height="23"/><rect x="25.5" y="580" width="232" height="38"/></g>
</svg>
</body></html>
